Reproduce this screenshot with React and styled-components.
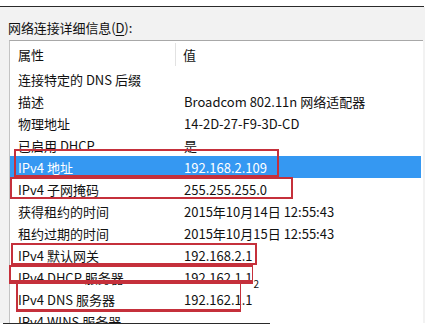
import styled, { createGlobalStyle } from "styled-components";

const GlobalStyle = createGlobalStyle`
  html, body {
    margin: 0;
    padding: 0;
    background: #ffffff;
  }
  body {
    font-family: "Noto Sans CJK SC", "Noto Sans", sans-serif;
    color: #111111;
  }
`;

const Page = styled.div`
  position: relative;
  width: 429px;
  height: 330px;
  overflow: hidden;
  background: #ffffff;
`;

const TopRule = styled.div`
  margin-top: 6px;
  width: 424px;
  height: 1px;
  background: #2a2a2a;
`;

const Panel = styled.div`
  width: 417px;
  height: 316px;
  padding-left: 8px;
  background: #f2f2f2;
  display: flex;
  flex-direction: column;
  overflow: hidden;
`;

const Label = styled.div`
  height: 33px;
  box-sizing: border-box;
  padding-bottom: 3px;
  display: flex;
  align-items: flex-end;
  font-size: 13px;
  letter-spacing: -0.1px;

  u {
    text-decoration: underline;
    text-underline-offset: 2px;
  }
`;

const ListBox = styled.div`
  margin-left: 1px;
  width: 413px;
  flex: 1;
  background: #ffffff;
  border-top: 1px solid #a8a8a8;
  border-left: 1px solid #c4c4c4;
  overflow: hidden;
`;

const HeaderRow = styled.div`
  display: grid;
  grid-template-columns: 165px 1fr;
  height: 27px;
  font-size: 13px;
`;

const HeaderCell = styled.div`
  display: flex;
  align-items: center;
  padding-left: ${(p) => p.$pad}px;
  border-left: ${(p) => (p.$divider ? "1px solid #e2e2e2" : "none")};
  margin: 2px 0 2px;
`;

const Row = styled.div`
  display: grid;
  grid-template-columns: 166px 1fr;
  height: 22px;
  align-items: center;
  font-size: 13px;
  white-space: nowrap;
  background: ${(p) => (p.$selected ? "#3598f2" : "transparent")};
  color: ${(p) => (p.$selected ? "#ffffff" : "#111111")};
  margin-right: 2px;
`;

const Cell = styled.div`
  padding-left: ${(p) => p.$pad}px;
`;

const Sub = styled.span`
  font-size: 10px;
  position: relative;
  top: 5px;
  margin-left: 1px;
`;

const BottomRule = styled.div`
  position: absolute;
  left: 3px;
  top: 323px;
  width: 267px;
  height: 1px;
  background: #2a2a2a;
`;

const BottomFade = styled.div`
  position: absolute;
  left: 0;
  right: 0;
  top: 324px;
  bottom: 0;
  background: #ffffff;
`;

const Mark = styled.div`
  position: absolute;
  box-sizing: border-box;
  border: 0 solid #c5303b;
  border-top-width: ${(p) => p.$t}px;
  border-right-width: ${(p) => p.$r}px;
  border-bottom-width: ${(p) => p.$b}px;
  border-left-width: ${(p) => p.$l}px;
`;

const rows = [
  ["连接特定的 DNS 后缀", ""],
  ["描述", "Broadcom 802.11n 网络适配器"],
  ["物理地址", "14-2D-27-F9-3D-CD"],
  ["已启用 DHCP", "是"],
  ["IPv4 地址", "192.168.2.109", true],
  ["IPv4 子网掩码", "255.255.255.0"],
  ["获得租约的时间", "2015年10月14日 12:55:43"],
  ["租约过期的时间", "2015年10月15日 12:55:43"],
  ["IPv4 默认网关", "192.168.2.1"],
  ["IPv4 DHCP 服务器", "192.162.1.1", false, "2"],
  ["IPv4 DNS 服务器", "192.162.1.1"],
  ["IPv4 WINS 服务器", ""],
];

// red annotation boxes drawn over the list: [x, y, w, h, top, right, bottom, left]
const marks = [
  [14, 149, 265, 28, 2, 2, 2, 2],
  [10, 177, 283, 22, 2, 2, 2, 2],
  [11, 243, 246, 22, 2, 2, 2, 2],
  [9, 265, 244, 19, 2, 1, 4, 2],
  [16, 284, 225, 28, 0, 1, 3, 2],
];

const App = () => (
  <Page>
    <GlobalStyle />
    <TopRule />
    <Panel>
      <Label>
        网络连接详细信息(<u>D</u>):
      </Label>
      <ListBox>
        <HeaderRow>
          <HeaderCell $pad={8}>属性</HeaderCell>
          <HeaderCell $pad={7} $divider>值</HeaderCell>
        </HeaderRow>
        {rows.map(([name, value, selected, sub]) => (
          <Row key={name} $selected={selected}>
            <Cell $pad={8}>{name}</Cell>
            <Cell $pad={8}>
              {value}
              {sub && <Sub>{sub}</Sub>}
            </Cell>
          </Row>
        ))}
      </ListBox>
    </Panel>
    {marks.map(([x, y, w, h, t, r, b, l], i) => (
      <Mark
        key={i}
        $t={t}
        $r={r}
        $b={b}
        $l={l}
        style={{ left: x, top: y, width: w, height: h }}
      />
    ))}
    <BottomFade />
    <BottomRule />
  </Page>
);

export default App;
